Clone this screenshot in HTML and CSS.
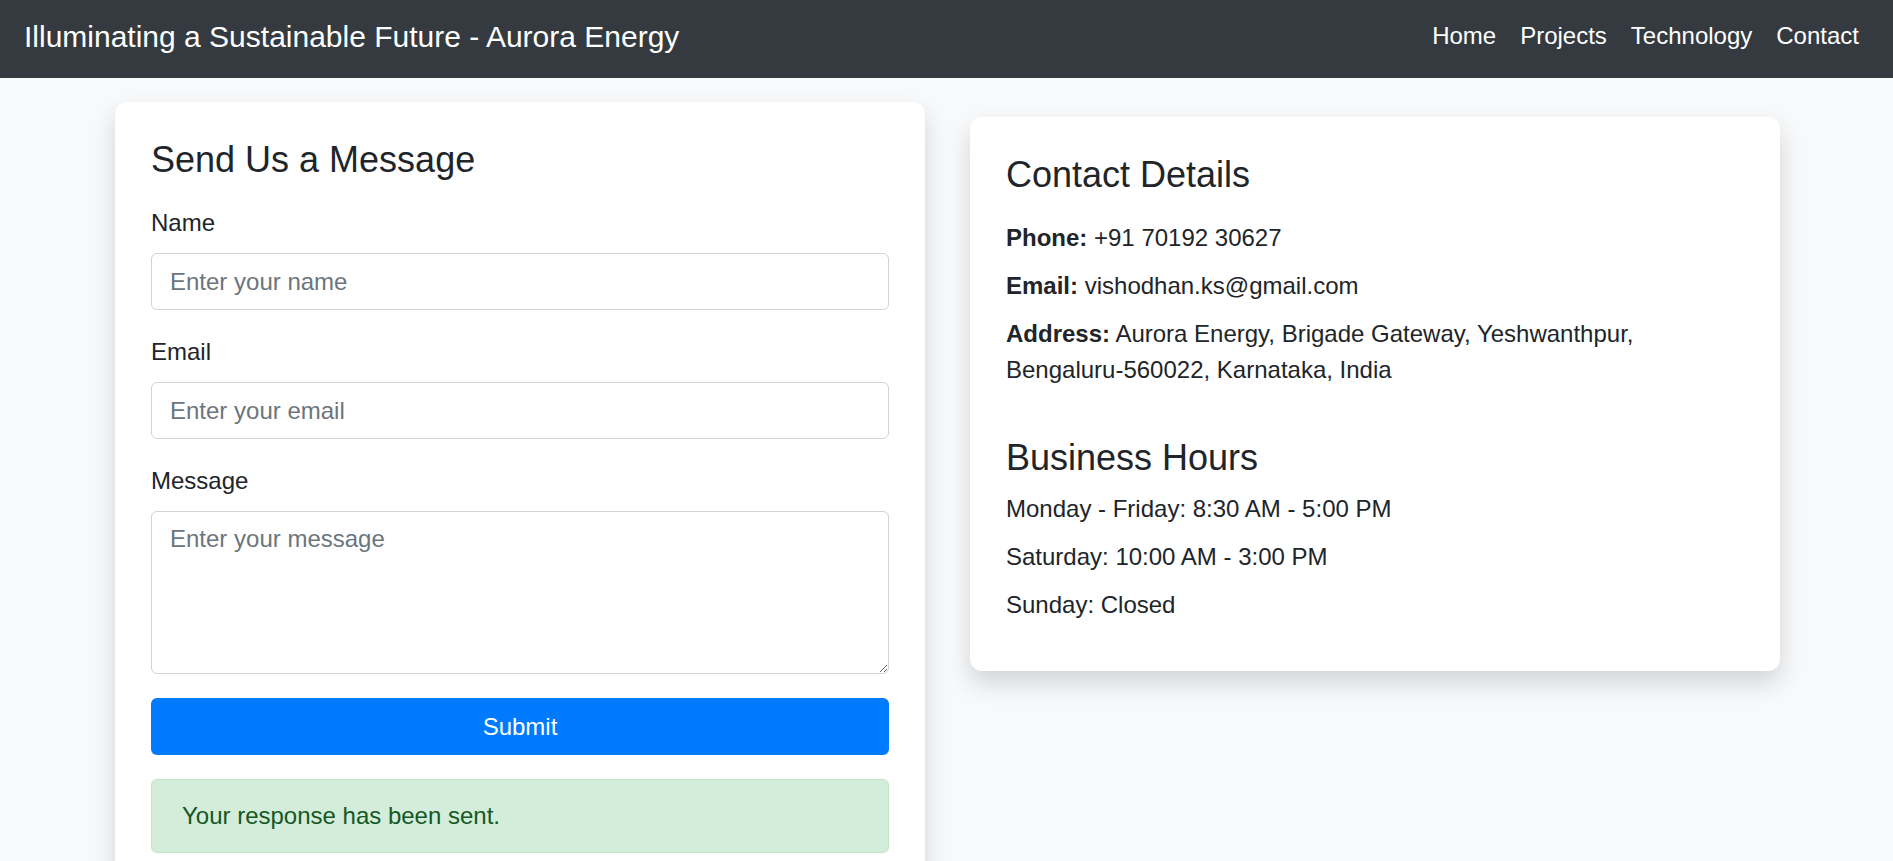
FILE: index.html
```html
<!DOCTYPE html>
<html lang="en">
<head>
<meta charset="utf-8">
<title>Contact - Aurora Energy</title>
<link rel="stylesheet" href="styles.css">
</head>
<body>
<nav class="navbar">
  <a class="brand" href="#">Illuminating a Sustainable Future - Aurora Energy</a>
  <ul class="nav-links">
    <li><a href="#">Home</a></li>
    <li><a href="#">Projects</a></li>
    <li><a href="#">Technology</a></li>
    <li><a href="#">Contact</a></li>
  </ul>
</nav>
<main class="page">
  <section class="card form-card">
    <h2 class="card-title">Send Us a Message</h2>
    <form class="contact-form">
      <div class="field">
        <label for="name">Name</label>
        <input id="name" class="control" type="text" placeholder="Enter your name">
      </div>
      <div class="field">
        <label for="email">Email</label>
        <input id="email" class="control" type="email" placeholder="Enter your email">
      </div>
      <div class="field">
        <label for="message">Message</label>
        <textarea id="message" class="control textarea" placeholder="Enter your message"></textarea>
      </div>
      <button type="button" class="submit">Submit</button>
    </form>
    <div class="alert">Your response has been sent.</div>
  </section>
  <section class="card info-card">
    <h2 class="card-title">Contact Details</h2>
    <p class="info"><strong>Phone:</strong> +91 70192 30627</p>
    <p class="info"><strong>Email:</strong> vishodhan.ks@gmail.com</p>
    <p class="info"><strong>Address:</strong> Aurora Energy, Brigade Gateway, Yeshwanthpur, Bengaluru-560022, Karnataka, India</p>
    <h2 class="card-title hours-title">Business Hours</h2>
    <p class="info">Monday - Friday: 8:30 AM - 5:00 PM</p>
    <p class="info">Saturday: 10:00 AM - 3:00 PM</p>
    <p class="info">Sunday: Closed</p>
  </section>
</main>
</body>
</html>
```
FILE: styles.css
```css
* {
  box-sizing: border-box;
}

html, body {
  margin: 0;
  padding: 0;
}

body {
  background: #f8f9fa;
  color: #212529;
  font-family: "Liberation Sans", Arial, sans-serif;
  font-size: 24px;
  line-height: 36px;
}

.navbar {
  display: flex;
  align-items: center;
  justify-content: space-between;
  height: 78px;
  padding: 14px 22px 19px 24px;
  background: #343a40;
}

.brand {
  color: #fff;
  text-decoration: none;
  font-size: 30px;
  line-height: 45px;
}

.nav-links {
  display: flex;
  list-style: none;
  margin: 0 0 2px 0;
  padding: 0;
}

.nav-links a {
  display: block;
  padding: 0 12px;
  color: #fff;
  text-decoration: none;
  font-size: 24px;
  line-height: 36px;
}

.page {
  display: grid;
  grid-template-columns: 810px 810px;
  column-gap: 45px;
  justify-content: center;
  align-items: start;
  padding-top: 24px;
  padding-left: 2px;
}

.card {
  background: #fff;
  border-radius: 12px;
  padding: 36px;
  box-shadow: 0 12px 24px rgba(0, 0, 0, 0.15);
}

.info-card {
  margin-top: 15px;
}

.card-title {
  margin: 0 0 24px 0;
  font-size: 36px;
  font-weight: normal;
  line-height: 43.2px;
}

.hours-title {
  margin-top: 48px;
  margin-bottom: 12px;
}

.field {
  margin-bottom: 24px;
}

.field label {
  display: block;
  margin-bottom: 12px;
}

.control {
  display: block;
  width: 100%;
  height: 57px;
  padding: 9px 18px;
  border: 1.5px solid #ced4da;
  border-radius: 6px;
  background: #fff;
  color: #495057;
  font-family: inherit;
  font-size: 24px;
  line-height: 36px;
}

.control::placeholder {
  color: #6c757d;
}

.textarea {
  height: 163px;
  resize: vertical;
}

.submit {
  display: block;
  width: 100%;
  height: 57px;
  border: none;
  border-radius: 6px;
  background: #007bff;
  color: #fff;
  font-family: inherit;
  font-size: 24px;
  line-height: 36px;
}

.alert {
  margin: 24px 0;
  padding: 18px 30px;
  border: 1.5px solid #c3e6cb;
  border-radius: 6px;
  background: #d4edda;
  color: #155724;
}

.info {
  margin: 0 0 12px 0;
}
```
